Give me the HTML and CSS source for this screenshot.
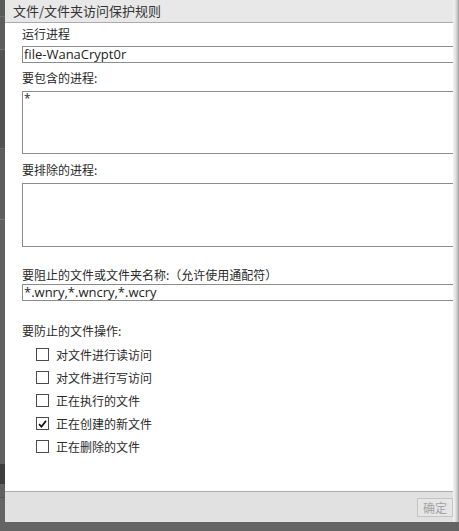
FILE: index.html
```html
<!DOCTYPE html>
<html lang="zh">
<head>
<meta charset="utf-8">
<link rel="stylesheet" href="styles.css">
</head>
<body>
<div class="screen">
  <div class="backdrop"></div>
  <div class="dialog">
    <div class="titlebar">文件/文件夹访问保护规则</div>
    <div class="content">
      <div class="label l-run">运行进程</div>
      <div class="field">file-WanaCrypt0r</div>
      <div class="label l-inc">要包含的进程:</div>
      <div class="area area-inc">*</div>
      <div class="label l-exc">要排除的进程:</div>
      <div class="area area-exc"></div>
      <div class="label l-block">要阻止的文件或文件夹名称:（允许使用通配符）</div>
      <div class="field">*.wnry,*.wncry,*.wcry</div>
      <div class="label l-ops">要防止的文件操作:</div>
      <ul class="checks">
        <li><span class="box"></span>对文件进行读访问</li>
        <li><span class="box"></span>对文件进行写访问</li>
        <li><span class="box"></span>正在执行的文件</li>
        <li><span class="box checked"><svg viewBox="0 0 12 12" width="12" height="12"><path d="M2.2 6.2 L4.8 8.9 L9.8 2.6" fill="none" stroke="#111" stroke-width="1.8"/></svg></span>正在创建的新文件</li>
        <li><span class="box"></span>正在删除的文件</li>
      </ul>
    </div>
    <div class="footer">
      <button class="ok" disabled>确定</button>
    </div>
  </div>
  <div class="shade"></div>
</div>
</body>
</html>
```
FILE: styles.css
```css
* { box-sizing: border-box; }
html, body { margin: 0; padding: 0; }
body {
  width: 459px;
  height: 531px;
  overflow: hidden;
  background: #646464;
  font-family: "Noto Sans CJK SC", "Noto Sans", sans-serif;
  font-size: 12px;
  color: #2a2a2a;
}
.screen {
  display: flex;
  width: 459px;
  height: 531px;
}
.backdrop {
  width: 5px;
  flex: none;
  height: 531px;
  background:
    linear-gradient(to bottom,
      #5a5a5a 0, #5a5a5a 16px, #6e6e6e 16px, #6e6e6e 17px,
      #5c5c5c 17px, #5c5c5c 49px, #727272 49px, #727272 50px,
      #535353 50px, #535353 148px, #6a6a6a 148px, #6a6a6a 149px,
      #5e5e5e 149px, #5e5e5e 219px, #777 219px, #777 220px,
      #616161 220px, #616161 464px, #3e3e3e 464px, #3e3e3e 484px,
      #616161 484px, #616161 497px, #555 497px, #555 498px,
      #646464 498px);
}
.dialog {
  width: 448px;
  height: 522px;
  flex: none;
  background: #fff;
  display: flex;
  flex-direction: column;
  overflow: hidden;
}
.shade {
  flex: 1;
  height: 522px;
  background: linear-gradient(to right, #f4f4f4, #e2e2e2 40%, #bdbdbd 80%, #9a9a9a);
}
.titlebar {
  height: 23px;
  flex: none;
  background: #e8e8e8;
  border-bottom: 1px solid #ababab;
  padding-left: 8px;
  font-size: 13px;
  line-height: 22px;
  color: #333;
  white-space: nowrap;
}
.content {
  flex: 1;
  padding: 0 0 0 17px;
  display: flex;
  flex-direction: column;
}
.label {
  height: 18px;
  line-height: 18px;
  white-space: nowrap;
}
.field {
  width: 460px;
  height: 17px;
  border: 1px solid #8c8c8c;
  font-family: "Open Sans", "Noto Sans", sans-serif;
  font-size: 13px;
  line-height: 14px;
  padding-left: 1px;
  color: #222;
  white-space: nowrap;
}
.l-run { margin-top: 2px; margin-bottom: 3px; }
.l-inc { margin-top: 6px; margin-bottom: 4px; }
.area {
  width: 460px;
  border: 1px solid #8c8c8c;
  padding: 2px 1px;
  line-height: 10px;
  font-family: "Open Sans", sans-serif;
}
.area-inc { height: 63px; }
.area-exc { height: 64px; }
.l-exc { margin-top: 7px; margin-bottom: 4px; }
.l-block { margin-top: 19px; margin-bottom: 0px; }
.l-ops { margin-top: 21px; }
.checks {
  list-style: none;
  margin: 3px 0 0 0;
  padding: 0 0 0 14px;
  display: flex;
  flex-direction: column;
}
.checks li {
  display: flex;
  align-items: center;
  height: 23px;
  white-space: nowrap;
}
.box {
  width: 13px;
  height: 13px;
  border: 1px solid #4a4a4a;
  background: #fff;
  margin-right: 7px;
  display: flex;
  align-items: center;
  justify-content: center;
  flex: none;
}
.box svg { display: block; }
.footer {
  height: 31px;
  flex: none;
  background: #e1e1e1;
  border-top: 1px solid #acacac;
  display: flex;
  justify-content: flex-end;
  align-items: flex-start;
  padding: 6px 0 0 0;
}
.ok {
  width: 36px;
  height: 19px;
  padding: 0;
  border: 1px solid #c4c4c4;
  background: #e6e6e6;
  color: #a3a3a3;
  font-family: "Noto Sans CJK SC", sans-serif;
  font-size: 12px;
  line-height: 16px;
}
```
